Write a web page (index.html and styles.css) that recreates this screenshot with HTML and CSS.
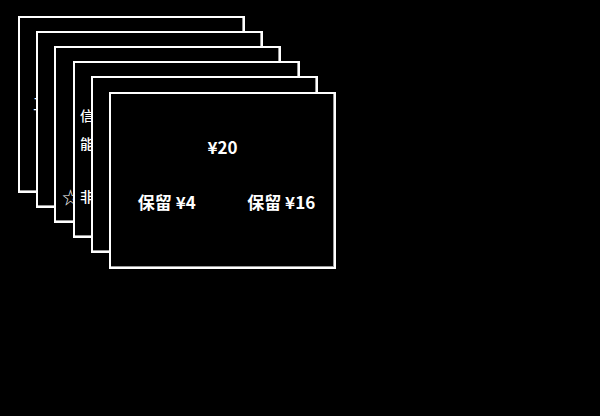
FILE: index.html
```html
<html><head><title>stack</title><link rel="stylesheet" href="styles.css"></head>
<body>
<div class='stack'>
  <div class='card'><div class='front'><div class='line word'>工作</div></div></div>
  <div class='card'></div>
  <div class='card'><div class='front'><div class='star'>☆</div></div></div>
  <div class='card'>
    <div class='front notes'>
      <div class='line'>信息</div>
      <div class='line'>能力</div>
      <div class='line last'>非常</div>
    </div>
  </div>
  <div class='card'></div>
  <div class='card top'>
    <div class='total'>¥20</div>
    <div class='split'><span>保留 ¥4</span><span>保留 ¥16</span></div>
  </div>
</div>
</body></html>
```

FILE: styles.css
```css
body { margin: 0; background-color: #000; color: #fff; font-family: 'Noto Sans CJK SC', 'Noto Sans', sans-serif; }
.stack { display: grid; padding-left: 18px; padding-top: 16px; }
.card {
  grid-area: 1 / 1; width: 223px; height: 173px;
  border: 2px solid #fff; background-color: #000;
  box-shadow: inset -1px -1px 0 #999;
  }
.card:nth-child(2) { margin-left: 18px; margin-top: 15px; }
.card:nth-child(3) { margin-left: 36px; margin-top: 30px; }
.card:nth-child(4) { margin-left: 55px; margin-top: 45px; }
.card:nth-child(5) { margin-left: 73px; margin-top: 60px; }
.card:nth-child(6) { margin-left: 91px; margin-top: 76px; }
.front { padding-left: 5px; }
.word { padding-left: 8px; padding-top: 75px; font-size: 16px; line-height: 20px; }
.star { padding-top: 139px; font-size: 17px; line-height: 20px; padding-left: 1px; }
.notes { padding-top: 42px; font-size: 14px; font-weight: 500; }
.notes .line { line-height: 20px; margin-bottom: 8px; }
.notes .last { margin-top: 33px; }
.top { display: flex; flex-direction: column; font-weight: bold; font-size: 17px; }
.total { padding-top: 40px; line-height: 26px; text-align: center; }
.split { margin-top: 29px; line-height: 26px; display: grid; grid-template-columns: 1fr 1fr; text-align: center; }
.split span:last-child { padding-left: 6px; }
```
